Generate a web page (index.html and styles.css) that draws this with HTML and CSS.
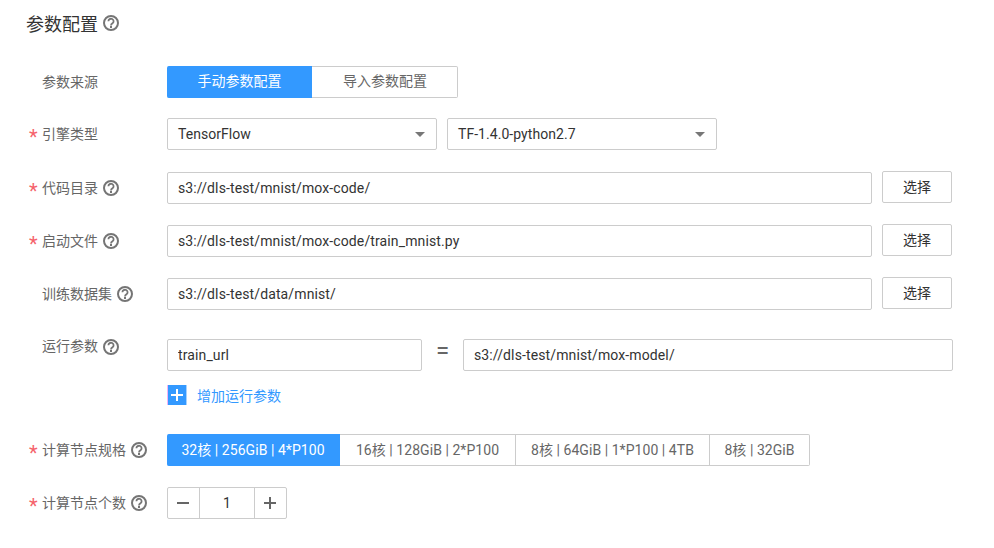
FILE: index.html
```html
<!DOCTYPE html>
<html lang="en">
<head>
    <meta charset="UTF-8">
    <title>参数配置</title>
    <link rel="stylesheet" href="styles.css">
</head>
<body>
    <svg class="svg-defs" width="0" height="0">
        <symbol id="help" viewBox="0 0 16 16">
            <circle cx="8" cy="8" r="7" fill="none" stroke="currentColor" stroke-width="2"/>
            <path d="M5.4 6.3a2.6 2.5 0 1 1 4.1 2c-.9.6-1.5 1-1.5 2.1" fill="none" stroke="currentColor" stroke-width="1.8"/>
            <rect x="7" y="11" width="2" height="2" fill="currentColor"/>
        </symbol>
    </svg>

    <div class="page">
        <h2 class="title">参数配置<svg class="help title-help"><use href="#help"/></svg></h2>

        <div class="row row-source">
            <div class="label"><span class="star"></span>参数来源</div>
            <div class="tabs">
                <div class="tab tab-active source-tab">手动参数配置</div>
                <div class="tab source-tab">导入参数配置</div>
            </div>
        </div>

        <div class="row row-engine">
            <div class="label"><span class="star">*</span>引擎类型</div>
            <div class="select"><span>TensorFlow</span><i class="caret"></i></div>
            <div class="select"><span>TF-1.4.0-python2.7</span><i class="caret"></i></div>
        </div>

        <div class="row row-code">
            <div class="label"><span class="star">*</span>代码目录<svg class="help"><use href="#help"/></svg></div>
            <input class="input input-path" type="text" value="s3://dls-test/mnist/mox-code/">
            <button class="pick" type="button">选择</button>
        </div>

        <div class="row row-path">
            <div class="label"><span class="star">*</span>启动文件<svg class="help"><use href="#help"/></svg></div>
            <input class="input input-path" type="text" value="s3://dls-test/mnist/mox-code/train_mnist.py">
            <button class="pick" type="button">选择</button>
        </div>

        <div class="row row-path">
            <div class="label"><span class="star"></span>训练数据集<svg class="help"><use href="#help"/></svg></div>
            <input class="input input-path" type="text" value="s3://dls-test/data/mnist/">
            <button class="pick" type="button">选择</button>
        </div>

        <div class="row row-args">
            <div class="label label-top"><span class="star"></span>运行参数<svg class="help"><use href="#help"/></svg></div>
            <input class="input input-key" type="text" value="train_url">
            <span class="equals">=</span>
            <input class="input input-value" type="text" value="s3://dls-test/mnist/mox-model/">
        </div>

        <div class="add-row">
            <span class="add-icon"><svg width="14" height="14" viewBox="0 0 14 14"><path d="M7 1v12M1 7h12" stroke="#fff" stroke-width="2"/></svg></span>
            <a class="add-link" href="#">增加运行参数</a>
        </div>

        <div class="row row-spec">
            <div class="label"><span class="star">*</span>计算节点规格<svg class="help"><use href="#help"/></svg></div>
            <div class="tabs">
                <div class="tab tab-active spec-1">32核 | 256GiB | 4*P100</div>
                <div class="tab spec-2">16核 | 128GiB | 2*P100</div>
                <div class="tab spec-3">8核 | 64GiB | 1*P100 | 4TB</div>
                <div class="tab spec-4">8核 | 32GiB</div>
            </div>
        </div>

        <div class="row row-count">
            <div class="label"><span class="star">*</span>计算节点个数<svg class="help"><use href="#help"/></svg></div>
            <div class="stepper">
                <div class="step"><svg width="12" height="12" viewBox="0 0 12 12"><path d="M0 6h12" stroke="#666" stroke-width="2"/></svg></div>
                <div class="count">1</div>
                <div class="step"><svg width="12" height="12" viewBox="0 0 12 12"><path d="M6 0v12M0 6h12" stroke="#666" stroke-width="2"/></svg></div>
            </div>
        </div>
    </div>
</body>
</html>
```

FILE: styles.css
```css
body {
    margin: 0;
    background: #fff;
    font-family: Roboto, "Noto Sans CJK SC", sans-serif;
    font-size: 14px;
    color: #333;
}

.svg-defs {
    display: block;
}

.page {
    padding: 12px 0 0 0;
    width: 994px;
    height: 536px;
    box-sizing: border-box;
    overflow: hidden;
}

.title {
    display: flex;
    align-items: center;
    margin: 0 0 0 26px;
    height: 24px;
    padding-bottom: 2px;
    box-sizing: border-box;
    font-size: 18px;
    font-weight: 400;
    color: #333;
}

.help {
    width: 16px;
    height: 16px;
    margin: 2px 0 0 5px;
    color: #757575;
    flex: none;
}

.title-help {
    margin: 0 0 0 5px;
}

.row {
    display: flex;
    align-items: flex-start;
    height: 32px;
}

.row-source { margin-top: 30px; }
.row-engine { margin-top: 20px; }
.row-code { margin-top: 22px; }
.row-path { margin-top: 21px; }
.row-args { margin-top: 29px; }
.row-spec { margin-top: 29px; }
.row-count { margin-top: 21px; }

.label {
    display: flex;
    align-items: center;
    width: 167px;
    height: 32px;
    padding: 0 0 2px 29px;
    box-sizing: border-box;
    color: #666;
    flex: none;
}

.label-top {
    height: 16px;
    line-height: 14px;
}

.star {
    width: 13px;
    height: 14px;
    line-height: 22px;
    color: #f5636b;
    font-size: 20px;
    flex: none;
}

.tabs {
    display: flex;
}

.tab {
    height: 32px;
    line-height: 30px;
    box-sizing: border-box;
    text-align: center;
    color: #666;
    border: 1px solid #ccc;
    border-left: none;
    letter-spacing: 0.05px;
}

.tab:first-child {
    border-radius: 2px 0 0 2px;
}

.tab:last-child {
    border-radius: 0 2px 2px 0;
}

.tab-active {
    background: #3399ff;
    border-color: #3399ff;
    color: #fff;
}

.source-tab { width: 146px; line-height: 28px; letter-spacing: 0; padding-left: 1px; }
.source-tab:first-child { width: 145px; }
.spec-1 { width: 173px; }
.spec-2 { width: 176px; }
.spec-3 { width: 194px; }
.spec-4 { width: 100px; }

.select {
    display: flex;
    align-items: center;
    justify-content: space-between;
    width: 270px;
    height: 32px;
    padding: 0 10px;
    margin-right: 10px;
    box-sizing: border-box;
    border: 1px solid #ccc;
    border-radius: 2px;
    color: #333;
    letter-spacing: 0.05px;
}

.caret {
    width: 0;
    height: 0;
    margin-right: 1px;
    border-left: 5px solid transparent;
    border-right: 5px solid transparent;
    border-top: 5px solid #777;
}

.input {
    height: 32px;
    padding: 0 10px;
    box-sizing: border-box;
    border: 1px solid #ccc;
    border-radius: 2px;
    font-family: inherit;
    font-size: 14px;
    letter-spacing: 0.12px;
    color: #333;
    outline: none;
}

.input-path { width: 705px; }
.input-key { width: 255px; }
.input-value { width: 490px; }

.equals {
    width: 41px;
    text-align: center;
    font-size: 24px;
    line-height: 24px;
    color: #666;
    flex: none;
}

.pick {
    width: 70px;
    height: 32px;
    margin: -1px 0 0 10px;
    padding: 0 0 2px;
    background: #fff;
    border: 1px solid #ccc;
    border-radius: 2px;
    font-family: inherit;
    font-size: 14px;
    color: #333;
}

.add-row {
    display: flex;
    align-items: center;
    height: 20px;
    margin: 14px 0 0 167px;
}

.add-icon {
    display: flex;
    align-items: center;
    justify-content: center;
    width: 20px;
    height: 20px;
    box-sizing: border-box;
    background: #3399ff;
    border-left: 1px solid #f3b3f5;
    border-right: 1px solid #a6d2ff;
}

.add-link {
    margin-left: 10px;
    color: #3399ff;
    text-decoration: none;
}

.stepper {
    display: flex;
    width: 120px;
    height: 32px;
    box-sizing: border-box;
    border: 1px solid #ccc;
    border-radius: 2px;
}

.step {
    display: flex;
    align-items: center;
    justify-content: center;
    width: 31px;
    padding-right: 1px;
    box-sizing: border-box;
    flex: none;
}

.count {
    flex: 1;
    line-height: 30px;
    text-align: center;
    border-left: 1px solid #ccc;
    border-right: 1px solid #ccc;
    color: #333;
}
```
